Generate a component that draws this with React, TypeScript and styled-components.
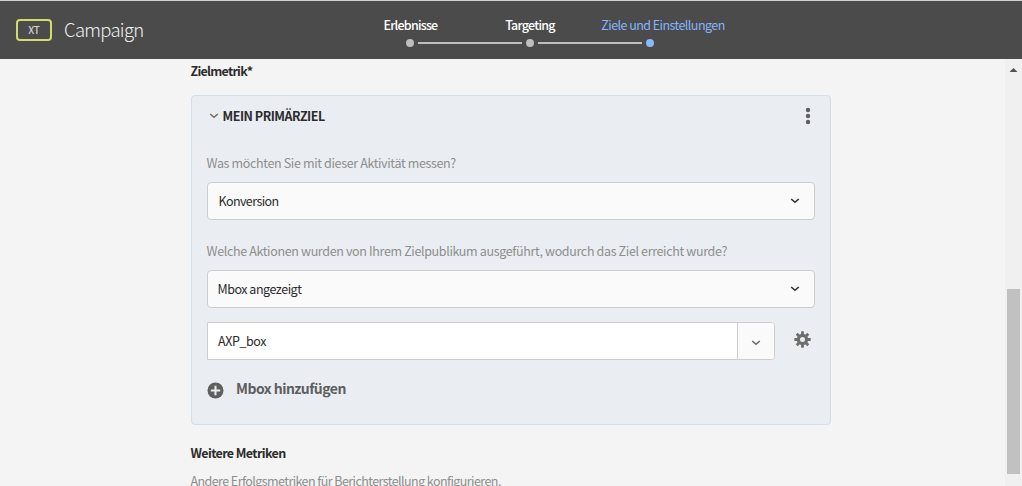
import React from "react";
import styled, { createGlobalStyle } from "styled-components";

const Global = createGlobalStyle`
  * { box-sizing: border-box; }
  html, body { margin: 0; padding: 0; }
  body {
    background: #f4f4f4;
    overflow: hidden;
    font-family: "Noto Sans CJK SC", "Noto Sans", sans-serif;
    color: #2c2c2c;
  }
`;

const Page = styled.div`
  display: flex;
  flex-direction: column;
  height: 486px;
  overflow: hidden;
`;

const TopBar = styled.header`
  flex: none;
  display: flex;
  height: 59px;
  padding-left: 16px;
  border-top: 1px solid #cdd1ce;
  background: #4b4b4b;
`;

const Brand = styled.div`
  display: flex;
  align-items: center;
  gap: 12px;
  width: 334px;
  height: 58px;
`;

const Badge = styled.span`
  display: flex;
  align-items: center;
  justify-content: center;
  width: 36px;
  height: 22px;
  border: 2px solid #d2db6e;
  border-radius: 4px;
  color: #d0d0d0;
  font-size: 10px;
  font-weight: 500;
  line-height: 16px;
  letter-spacing: -0.1px;
`;

const Title = styled.h1`
  margin: 0 0 2px;
  color: #f0f0f0;
  font-size: 18.5px;
  font-weight: 300;
  line-height: 28px;
  letter-spacing: -0.72px;
`;

const Steps = styled.ol`
  display: flex;
  margin: 0;
  padding: 15px 0 0;
  list-style: none;
`;

const Step = styled.li<{ $active?: boolean }>`
  display: flex;
  flex-direction: column;
  align-items: center;
  width: 120px;
  color: ${p => (p.$active ? "#83b5fa" : "#ffffff")};
`;

const StepLabel = styled.span<{ $shift?: number; $spacing: number; $weight?: number }>`
  margin-left: ${p => p.$shift ?? 0}px;
  font-size: 12.5px;
  font-weight: ${p => p.$weight ?? 500};
  line-height: 18px;
  letter-spacing: ${p => p.$spacing}px;
  white-space: nowrap;
`;

const Track = styled.span`
  display: flex;
  align-items: center;
  width: 120px;
  height: 8px;
  margin-top: 5px;
`;

const Rail = styled.span<{ $on?: boolean }>`
  flex: 1;
  height: 2px;
  background: ${p => (p.$on ? "#bebebe" : "transparent")};
`;

const Dot = styled.span<{ $active?: boolean }>`
  width: 8px;
  height: 8px;
  margin: 0 4px;
  border-radius: 50%;
  background: ${p => (p.$active ? "#87b9ff" : "#bebebe")};
`;

const Body = styled.div`
  flex: 1;
  display: flex;
  justify-content: space-between;
  min-height: 0;
`;

const Content = styled.main`
  display: flex;
  flex-direction: column;
  width: 831px;
  padding-left: 191px;
`;

const SectionTitle = styled.h2<{ $spacing: number }>`
  flex: none;
  margin: 0 0 0 -0.5px;
  font-size: 12.5px;
  font-weight: 600;
  line-height: 24px;
  letter-spacing: ${p => p.$spacing}px;
`;

const Card = styled.section`
  flex: none;
  height: 330px;
  margin: 12px 0 16px;
  padding: 0 15px;
  border: 1px solid #d3deec;
  border-radius: 4px;
  background: #eaedf2;
`;

const CardHead = styled.div`
  display: flex;
  align-items: center;
  height: 40px;
  padding: 0 4px 0 1.5px;
`;

const CardTitle = styled.h3`
  flex: 1;
  margin: 0 0 0 4px;
  font-size: 12.5px;
  font-weight: 600;
  line-height: 20px;
  letter-spacing: -0.48px;
`;

const Hint = styled.p<{ $spacing: number }>`
  margin: 0 0 0 -0.5px;
  color: #8e8e8e;
  font-size: 12.5px;
  line-height: 20px;
  letter-spacing: ${p => p.$spacing}px;
  white-space: nowrap;
`;

const Question = styled.div`
  padding-top: 17px;
  & + & {
    padding-top: 21px;
  }
  ${Hint} {
    margin-bottom: 9px;
  }
`;

const Footnote = styled.div`
  margin-top: 6px;
`;

const Select = styled.div<{ $spacing: number; $indent?: number }>`
  display: flex;
  align-items: center;
  justify-content: space-between;
  height: 38px;
  padding: 0 14.5px 0 ${p => p.$indent ?? 9.5}px;
  border: 1px solid #cdcdcd;
  border-radius: 4px;
  background: #fafafa;
  font-size: 12.5px;
  line-height: 20px;
  letter-spacing: ${p => p.$spacing}px;
`;

const ComboRow = styled.div`
  display: flex;
  align-items: center;
  gap: 19px;
  margin-top: 14px;
`;

const Combo = styled.div`
  display: flex;
  width: 568px;
  height: 38px;
  border: 1px solid #cdcdcd;
  border-radius: 0 4px 4px 0;
  background: #ffffff;
`;

const ComboValue = styled.span`
  flex: 1;
  padding-left: 10px;
  font-size: 12.5px;
  line-height: 36px;
  letter-spacing: -0.42px;
`;

const ComboToggle = styled.span`
  display: flex;
  align-items: center;
  justify-content: center;
  width: 37px;
  padding: 4px 1px 0 0;
  border-left: 1px solid #cdcdcd;
  border-radius: 0 3px 3px 0;
  background: #fafafa;
`;

const AddRow = styled.div`
  display: flex;
  align-items: center;
  gap: 12px;
  height: 24px;
  margin-top: 18px;
  color: #5f5f5f;
  font-size: 14px;
  font-weight: 600;
  line-height: 24px;
  letter-spacing: -0.53px;
`;

const AddLabel = styled.span`
  height: 28px;
`;

const Icon = styled.svg`
  display: block;
  flex: none;
`;

const GearButton = styled.span`
  padding-bottom: 3px;
`;

const Scrollbar = styled.aside`
  display: flex;
  flex-direction: column;
  align-items: center;
  width: 17px;
  padding: 9px 0 0;
  background: #f0f0f0;
`;

const Thumb = styled.div`
  width: 13px;
  height: 185px;
  margin-top: 217px;
  background: #c1c1c1;
`;

function Chevron({ color, stroke = 1.6 }: { color: string; stroke?: number }) {
  return (
    <Icon width="10" height="6" viewBox="0 0 10 6">
      <path d="M1.2 1 L5 4.3 L8.8 1" fill="none" stroke={color} strokeWidth={stroke} />
    </Icon>
  );
}

function Gear() {
  return (
    <Icon width="17" height="17" viewBox="-8.5 -8.5 17 17">
      <g fill="#6e6e6e">
        {[0, 45, 90, 135].map(a => (
          <rect key={a} x="-1.4" y="-8.2" width="2.8" height="16.4" rx="0.4" transform={`rotate(${a})`} />
        ))}
        <circle r="5.7" />
      </g>
      <circle r="2.5" fill="#eaedf2" />
    </Icon>
  );
}

export default function App() {
  return (
    <Page>
      <Global />
      <TopBar>
        <Brand>
          <Badge>XT</Badge>
          <Title>Campaign</Title>
        </Brand>
        <Steps>
          <Step>
            <StepLabel $shift={1} $spacing={-0.8}>Erlebnisse</StepLabel>
            <Track><Rail /><Dot /><Rail $on /></Track>
          </Step>
          <Step>
            <StepLabel $spacing={-0.75}>Targeting</StepLabel>
            <Track><Rail $on /><Dot /><Rail $on /></Track>
          </Step>
          <Step $active>
            <StepLabel $shift={26} $spacing={-0.55} $weight={400}>Ziele und Einstellungen</StepLabel>
            <Track><Rail $on /><Dot $active /><Rail /></Track>
          </Step>
        </Steps>
      </TopBar>
      <Body>
        <Content>
          <SectionTitle $spacing={-0.74}>Zielmetrik*</SectionTitle>
          <Card>
            <CardHead>
              <Chevron color="#6a6a6a" stroke={1.4} />
              <CardTitle>MEIN PRIMÄRZIEL</CardTitle>
              <Icon width="6" height="18" viewBox="0 0 6 18">
                <g fill="#5f5f5f">
                  <circle cx="3" cy="3" r="2.2" />
                  <circle cx="3" cy="9" r="2.2" />
                  <circle cx="3" cy="15" r="2.2" />
                </g>
              </Icon>
            </CardHead>
            <Question>
              <Hint $spacing={-0.35}>Was möchten Sie mit dieser Aktivität messen?</Hint>
              <Select $spacing={-0.58} $indent={10.5}>Konversion<Chevron color="#323232" /></Select>
            </Question>
            <Question>
              <Hint $spacing={-0.35}>
                Welche Aktionen wurden von Ihrem Zielpublikum ausgeführt, wodurch das Ziel erreicht wurde?
              </Hint>
              <Select $spacing={-0.48}>Mbox angezeigt<Chevron color="#323232" /></Select>
            </Question>
            <ComboRow>
              <Combo>
                <ComboValue>AXP_box</ComboValue>
                <ComboToggle><Chevron color="#6a6a6a" /></ComboToggle>
              </Combo>
              <GearButton><Gear /></GearButton>
            </ComboRow>
            <AddRow>
              <Icon width="17" height="17" viewBox="0 0 17 17">
                <circle cx="8.5" cy="8.5" r="8" fill="#5f5f5f" />
                <path d="M8.5 3.8v9.4M3.8 8.5h9.4" stroke="#eaedf2" strokeWidth="2" />
              </Icon>
              <AddLabel>Mbox hinzufügen</AddLabel>
            </AddRow>
          </Card>
          <SectionTitle $spacing={-0.62}>Weitere Metriken</SectionTitle>
          <Footnote>
            <Hint $spacing={-0.57}>Andere Erfolgsmetriken für Berichterstellung konfigurieren.</Hint>
          </Footnote>
        </Content>
        <Scrollbar>
          <Icon width="9" height="4" viewBox="0 0 9 4">
            <path d="M0.5 4 L4.5 0 L8.5 4 Z" fill="#505050" />
          </Icon>
          <Thumb />
        </Scrollbar>
      </Body>
    </Page>
  );
}
